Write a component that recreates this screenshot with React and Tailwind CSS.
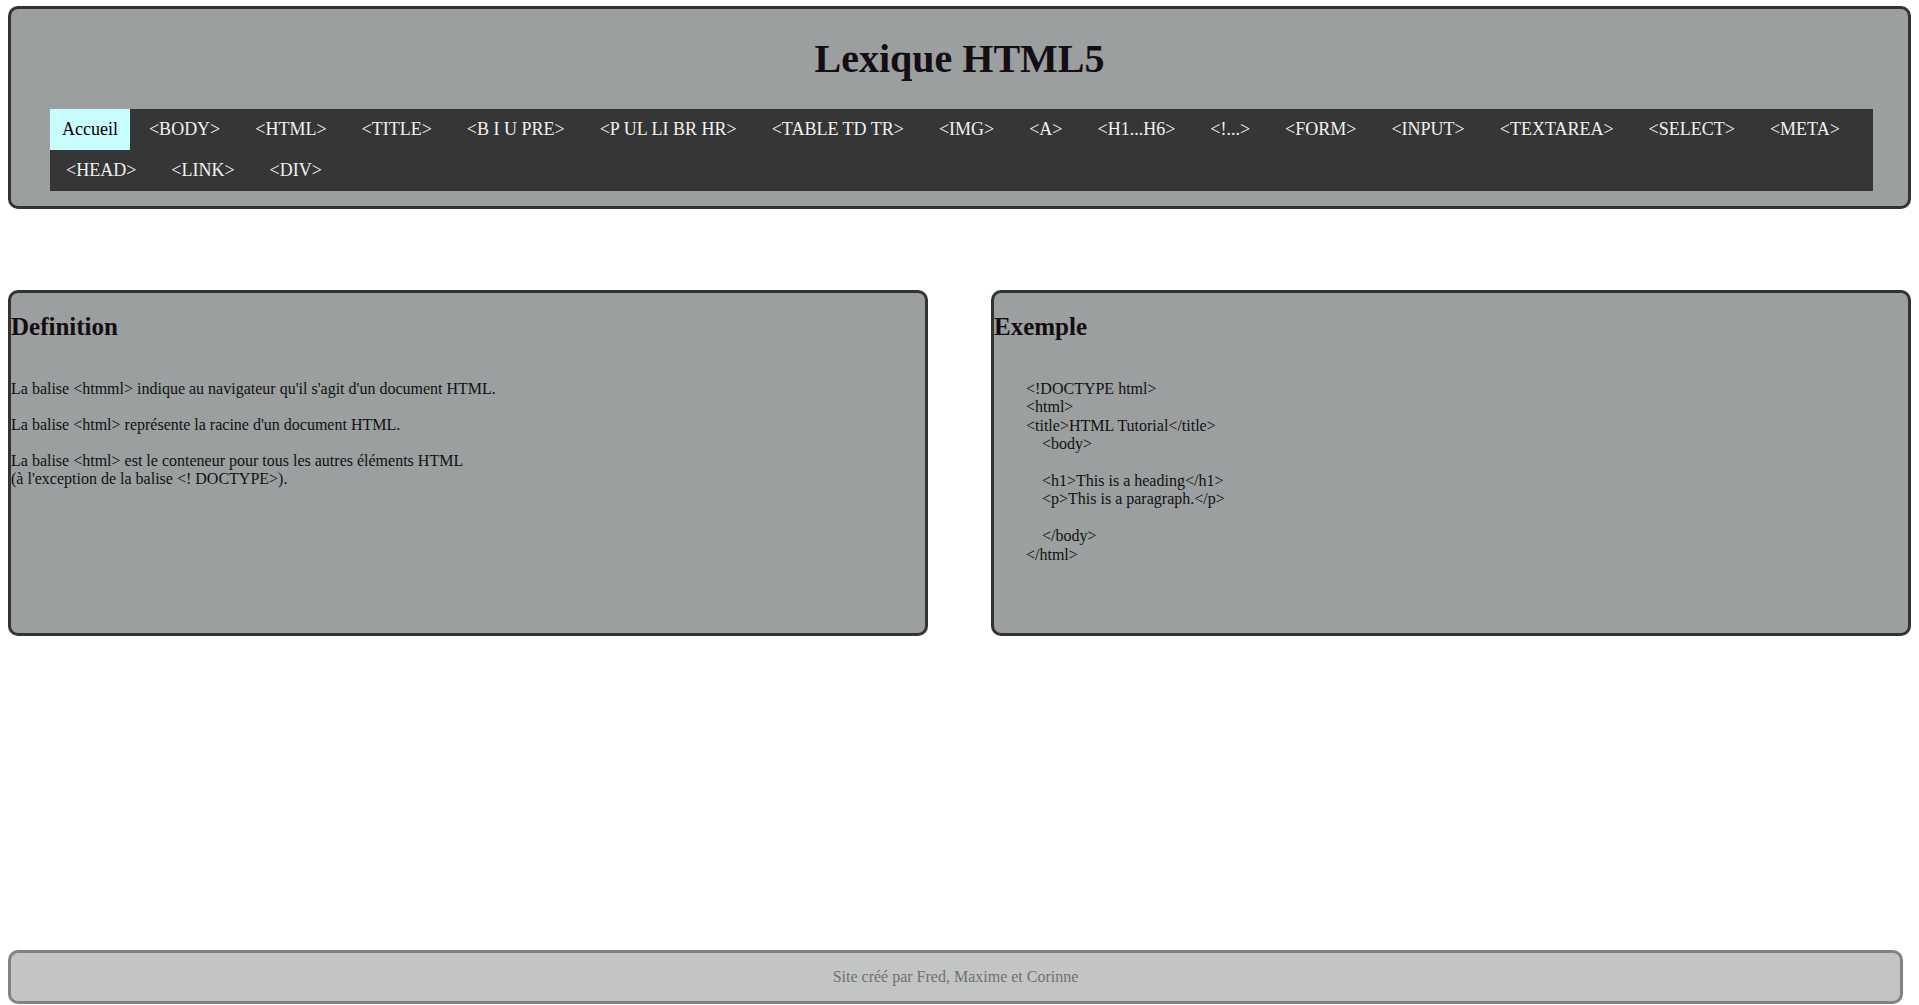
const navItems = [
  "<BODY>",
  "<HTML>",
  "<TITLE>",
  "<B I U PRE>",
  "<P UL LI BR HR>",
  "<TABLE TD TR>",
  "<IMG>",
  "<A>",
  "<H1...H6>",
  "<!...>",
  "<FORM>",
  "<INPUT>",
  "<TEXTAREA>",
  "<SELECT>",
  "<META>",
  "<HEAD>",
  "<LINK>",
  "<DIV>",
];

const codeLines = [
  "<!DOCTYPE html>",
  "<html>",
  "<title>HTML Tutorial</title>",
  "\u00a0\u00a0\u00a0\u00a0<body>",
  "",
  "\u00a0\u00a0\u00a0\u00a0<h1>This is a heading</h1>",
  "\u00a0\u00a0\u00a0\u00a0<p>This is a paragraph.</p>",
  "",
  "\u00a0\u00a0\u00a0\u00a0</body>",
  "</html>",
];

function Panel({ title, children }) {
  return (
    <section className="h-[346px] w-[920px] rounded-[10px] border-[3px] border-[#333] bg-[#9b9fa0]">
      <h2 className="mt-[20px] mb-[39px] text-[25px] font-bold text-[#140d10]">{title}</h2>
      {children}
    </section>
  );
}

export default function App() {
  return (
    <div className="flex min-h-screen flex-col bg-white font-['Liberation_Serif',serif] text-[16px] leading-[normal] text-[#111]">
      <header className="mx-2 mt-[6px] rounded-[10px] border-[3px] border-[#333] bg-[#9b9fa0] pb-[15px]">
        <h1 className="mt-[26px] mb-[27px] text-center text-[40px] font-bold text-[#140d12]">Lexique HTML5</h1>
        <nav className="ml-[39px] mr-[35px] bg-[#363636]">
          <ul className="flex flex-wrap gap-x-[3px] text-[18px]">
            <li>
              <a href="#" className="block bg-[#c8fcfd] px-[12px] py-[10px] text-black">
                Accueil
              </a>
            </li>
            {navItems.map((item) => (
              <li key={item}>
                <a href="#" className="block px-4 py-[10px] text-[#f2f2f2]">
                  {item}
                </a>
              </li>
            ))}
          </ul>
        </nav>
      </header>

      <main className="mx-2 mt-[81px] flex justify-between">
        <Panel title="Definition">
          <p className="mb-[18px]">La balise &lt;htmml&gt; indique au navigateur qu'il s'agit d'un document HTML.</p>
          <p className="mb-[18px]">La balise &lt;html&gt; représente la racine d'un document HTML.</p>
          <p>
            La balise &lt;html&gt; est le conteneur pour tous les autres éléments HTML
            <br />
            (à l'exception de la balise &lt;! DOCTYPE&gt;).
          </p>
        </Panel>
        <Panel title="Exemple">
          <div className="pl-8">
            {codeLines.map((line, i) => (
              <div key={i} className="h-[18.4px]">
                {line}
              </div>
            ))}
          </div>
        </Panel>
      </main>

      <footer className="mt-auto mb-px ml-2 mr-4 rounded-[10px] border-[3px] border-[#828282] bg-[#c3c5c4] py-[15px] text-center text-[#717171]">
        Site créé par Fred, Maxime et Corinne
      </footer>
    </div>
  );
}
